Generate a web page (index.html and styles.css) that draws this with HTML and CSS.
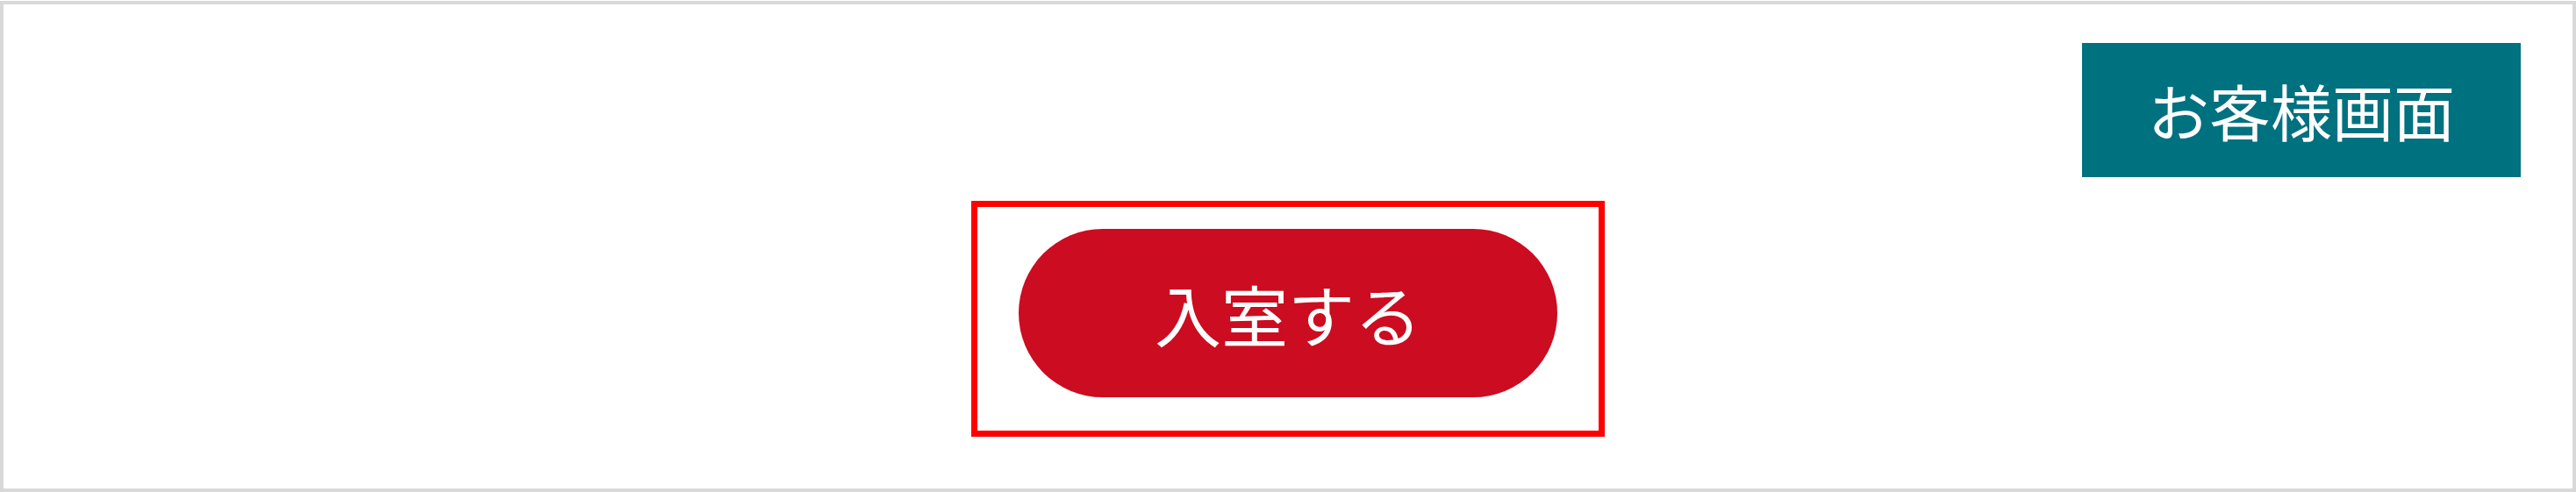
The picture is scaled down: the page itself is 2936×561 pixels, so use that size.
FILE: index.html
```html
<!DOCTYPE html>
<html lang="ja">
<head>
<meta charset="utf-8">
<title>入室</title>
<link rel="stylesheet" href="styles.css">
</head>
<body>
<div class="frame">
  <div class="topbar">
    <div class="customer-btn">お客様画面</div>
  </div>
  <div class="enter-wrap">
    <div class="enter-btn">入室する</div>
  </div>
</div>
</body>
</html>
```

FILE: styles.css
```css
html, body {
  margin: 0;
  padding: 0;
  background: #ffffff;
}
body {
  font-family: "Noto Sans CJK JP", "Noto Sans", sans-serif;
}
.frame {
  box-sizing: border-box;
  width: 2936px;
  height: 560px;
  margin-top: 1px;
  border: 4px solid #d9d9d9;
  display: flex;
  flex-direction: column;
  align-items: center;
}
.topbar {
  align-self: stretch;
  display: flex;
  justify-content: flex-end;
  padding-top: 44px;
  padding-right: 59px;
}
.customer-btn {
  width: 500px;
  height: 153px;
  background: #00717f;
  color: #ffffff;
  font-size: 70px;
  display: flex;
  align-items: center;
  justify-content: center;
  line-height: 1;
}
.enter-wrap {
  box-sizing: border-box;
  margin-top: 27px;
  width: 722px;
  height: 269px;
  border: 7px solid #ff0000;
  padding-top: 25px;
  display: flex;
  justify-content: center;
  align-items: flex-start;
}
.enter-btn {
  width: 614px;
  height: 192px;
  border-radius: 96px;
  background: #cc0c20;
  color: #ffffff;
  font-size: 76px;
  line-height: 1;
  display: flex;
  align-items: center;
  justify-content: center;
}
```
